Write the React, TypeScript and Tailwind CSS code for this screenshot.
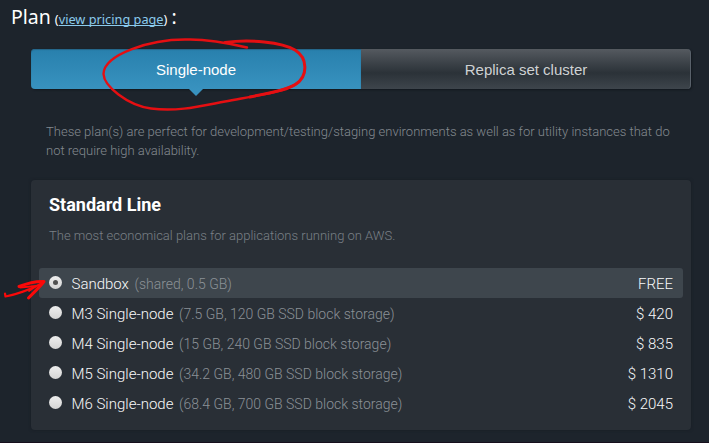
const plans = [
  { name: 'Sandbox', detail: '(shared, 0.5 GB)', price: 'FREE', selected: true },
  { name: 'M3 Single-node', detail: '(7.5 GB, 120 GB SSD block storage)', price: '$ 420', selected: false },
  { name: 'M4 Single-node', detail: '(15 GB, 240 GB SSD block storage)', price: '$ 835', selected: false },
  { name: 'M5 Single-node', detail: '(34.2 GB, 480 GB SSD block storage)', price: '$ 1310', selected: false },
  { name: 'M6 Single-node', detail: '(68.4 GB, 700 GB SSD block storage)', price: '$ 2045', selected: false },
];

function Radio({ checked }: { checked: boolean }) {
  return (
    <span className="mb-[3px] flex size-[13px] shrink-0 items-center justify-center rounded-full bg-linear-to-b from-[#eeeeee] to-[#d4d4d4]">
      {checked && <span className="size-[5px] rounded-full bg-[#505050]" />}
    </span>
  );
}

function Tabs() {
  return (
    <div className="flex h-10 w-[660px] rounded-[4px] font-['Liberation_Sans',Arial,sans-serif] text-[15px] shadow-[1px_1px_2px_#12181e]">
      <button className="relative w-[330px] rounded-l-[4px] bg-linear-to-b from-[#2880ad] to-[#3892bf] pt-[2px] text-white shadow-[inset_0_1px_1px_#256488]">
        Single-node
        <span className="absolute top-full left-[158px] h-[7px] w-[14px] bg-[#3892bf] [clip-path:polygon(0_0,100%_0,50%_100%)]" />
      </button>
      <button className="w-[330px] rounded-r-[4px] border-r border-[#59616a] bg-linear-to-b from-[#555a60] via-[#2b3238] via-60% to-[#3e454c] pt-[2px] pl-px text-[#cfd2d4]">
        Replica set cluster
      </button>
    </div>
  );
}

function PlanCard() {
  return (
    <section className="mt-5 h-[250px] w-[660px] rounded-[4px] bg-[#292f36] px-2 shadow-[0_0_3px_#171d24]">
      <h2 className="ml-[10px] pt-[14px] text-[18px] leading-[22px] font-bold text-white">Standard Line</h2>
      <p className="mt-[10px] ml-[10px] text-[13px] leading-[19px] font-light text-[#7a8086]">
        The most economical plans for applications running on AWS.
      </p>
      <ul className="mt-[23px]">
        {plans.map((plan) => (
          <li
            key={plan.name}
            className={`flex h-[30px] items-center rounded-[3px] px-[10px] pt-[2px] ${plan.selected ? 'bg-[#3e464d]' : ''}`}
          >
            <Radio checked={plan.selected} />
            <span className="ml-[9.5px] text-[15px] font-light text-[#f8f9fa]">{plan.name}</span>
            <span className="ml-[5.5px] text-[14px] font-light text-[#8b9196]">{plan.detail}</span>
            <span className="ml-auto text-[15px] font-light text-[#f8f9fa]">{plan.price}</span>
          </li>
        ))}
      </ul>
    </section>
  );
}

function Annotations() {
  return (
    <svg className="pointer-events-none absolute inset-0" width="709" height="443" fill="none" strokeLinecap="round" strokeLinejoin="round">
      <g stroke="#e50f12">
        <path d="M247 47.500C228 43 208 39 187 39.500C151 39 104 54 103.500 74C104 86 127 105 151 108.500C178 112 201 106 225 101.500C254 96 287 92 299 82" strokeWidth="2.400" />
        <path d="M225 42.500C249 39 282 42 295 50C308 58 308 76 296 84C286 91 267 93 250 97" strokeWidth="3" />
      </g>
      <g stroke="#fb0909">
        <path d="M5 293.500L5.500 296.500C16 294.500 28 290.500 43 283" strokeWidth="2.200" />
        <path d="M19 286.500C28 283 36 281 44 281.500C39 288 33 293 28.500 298" strokeWidth="3" />
        <path d="M20 287.500L36 286L29 291" strokeWidth="1.800" />
      </g>
    </svg>
  );
}

export default function App() {
  return (
    <main className="relative h-[443px] w-[709px] overflow-hidden border-b border-[#160f1c] bg-[#1d242c] font-[Roboto,sans-serif]">
      <h1 className="flex h-[49px] items-baseline pt-[3px] pl-[11px] font-['Noto_Sans',sans-serif] text-[19.5px] leading-[28px] font-normal text-white">
        Plan
        <span className="ml-[4px] text-[12.75px]">
          (<a className="text-[#8bcbed] underline decoration-1 underline-offset-1 [text-decoration-skip-ink:none]" href="#pricing">view pricing page</a>)
        </span>
        <span className="ml-[4px]">:</span>
      </h1>
      <div className="pl-[31px]">
        <Tabs />
        <p className="mt-[33px] ml-[15px] h-[38px] w-[640px] text-[13px] leading-[19px] font-light text-[#848a90]">
          These plan(s) are perfect for development/testing/staging environments as well as for utility instances that do
          <br />
          not require high availability.
        </p>
        <PlanCard />
      </div>
      <Annotations />
    </main>
  );
}
